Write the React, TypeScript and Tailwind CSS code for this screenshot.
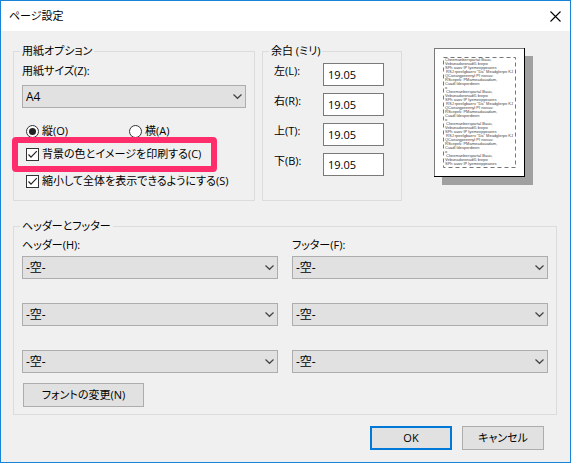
import { useState } from 'react';

const sampleLines = [
  'Cheemanberspartal Bauu,',
  'Vebunadoronadt5 bsrpo',
  'SPh auov IP lyemeeppeaees',
  ' RSJ rpeelgbaerv "Da" Meadglerpe KJ',
  'QCoeargpeeenyl PI nosuu:',
  'RScepek: PMameadauadam,',
  'Cuadl ldesperdieen',
  'o',
];

const margins = [
  { id: 'left', label: '左(L):' },
  { id: 'right', label: '右(R):' },
  { id: 'top', label: '上(T):' },
  { id: 'bottom', label: '下(B):' },
];

const Select = ({ id, label, options }: { id: string; label?: string; options: string[] }) => (
  <div className="relative">
    <select
      id={id}
      aria-label={label}
      className="block w-full h-[23px] appearance-none bg-[#e1e1e1] border border-[#adadad] pl-[3px] pr-5 text-[12px] leading-4"
    >
      {options.map(option => (
        <option key={option}>{option}</option>
      ))}
    </select>
    <svg
      className="absolute right-1 top-2 w-[9px] h-[7px] pointer-events-none"
      viewBox="0 0 9 7"
      fill="none"
      stroke="#444"
      strokeWidth="1.2"
    >
      <path d="M0.5 1.5 L4.5 5.3 L8.5 1.5" />
    </svg>
  </div>
);

const Radio = ({ label, checked, onChange }: { label: string; checked: boolean; onChange: () => void }) => (
  <label className="flex items-center gap-[3px] h-5">
    <span className="relative w-[13px] h-[13px] shrink-0">
      <input
        type="radio"
        name="orientation"
        checked={checked}
        onChange={onChange}
        className="block w-[13px] h-[13px] appearance-none rounded-full bg-white border border-[#333]"
      />
      {checked && <span className="absolute inset-[3px] rounded-full bg-[#222] pointer-events-none" />}
    </span>
    {label}
  </label>
);

const Checkbox = ({ label, highlighted }: { label: string; highlighted?: boolean }) => {
  const [checked, setChecked] = useState(true);

  return (
    <label className="relative flex items-center gap-[3px] h-5 whitespace-nowrap">
      <span className="relative w-[13px] h-[13px] shrink-0">
        <input
          type="checkbox"
          checked={checked}
          onChange={() => setChecked(!checked)}
          className="block w-[13px] h-[13px] appearance-none bg-white border border-[#333]"
        />
        {checked && (
          <svg
            className="absolute inset-0 pointer-events-none"
            viewBox="0 0 13 13"
            fill="none"
            stroke="#222"
            strokeWidth="1.2"
          >
            <path d="M2.5 6.5 L5 9.2 L10.8 3.2" />
          </svg>
        )}
      </span>
      {label}
      {highlighted && (
        <span className="absolute -left-[14px] -right-4 -top-[7px] -bottom-2 border-[6px] border-[#ff2d6b] rounded-[4px] pointer-events-none" />
      )}
    </label>
  );
};

const PagePreview = () => (
  <svg className="w-[99px] h-[137px] shrink-0" viewBox="0 0 99 137" role="img" aria-label="プレビュー">
    <rect x="8" y="8" width="91" height="129" fill="#a0a0a0" />
    <rect width="91" height="129" fill="#000" />
    <rect width="90" height="128" fill="#7a7a7a" />
    <rect x="1" y="1" width="89" height="127" fill="#fff" />
    <rect x="9.5" y="9.5" width="72" height="110" fill="none" stroke="#777" strokeDasharray="4 3" />
    <g fontSize="4" fontFamily="Liberation Sans, sans-serif" fill="#444">
      {Array.from({ length: 27 }, (_, i) => (
        <text key={i} x={i > 7 && i % 8 === 0 ? 12 : 11} y={13 + i * 4} xmlSpace="preserve">
          {sampleLines[i % 8]}
        </text>
      ))}
    </g>
  </svg>
);

const App = () => {
  const [orientation, setOrientation] = useState('portrait');

  return (
    <div className="min-h-screen flex flex-col bg-[#f0f0f0] border border-[#1883d7] text-black text-[11px] leading-4 font-['Open_Sans','Noto_Sans_CJK_JP',sans-serif] [font-feature-settings:'palt']">
      <header className="flex items-center justify-between h-[30px] bg-white pl-2 pr-[9px]">
        <h1>ページ設定</h1>
        <button type="button" aria-label="閉じる">
          <svg className="w-[11px] h-[11px]" viewBox="0 0 11 11" fill="none" stroke="#000" strokeWidth="1.1">
            <path d="M0.5 0.5 L10.5 10.5 M10.5 0.5 L0.5 10.5" />
          </svg>
        </button>
      </header>

      <main className="pt-3 pl-3 pr-[13px] pb-3">
        <div className="grid grid-cols-[242fr_140fr_148fr] gap-[7px]">
          <fieldset className="min-w-0 border border-[#dcdcdc] px-2 pb-[9px]">
            <legend className="-ml-0.5 px-0.5">用紙オプション</legend>
            <label htmlFor="paper-size" className="block mt-1 mb-1.5">用紙サイズ(Z):</label>
            <Select id="paper-size" options={['A4']} />
            <div className="pl-1 pt-[13px]">
              <div className="grid grid-cols-2 pr-[14px]">
                <Radio
                  label="縦(O)"
                  checked={orientation === 'portrait'}
                  onChange={() => setOrientation('portrait')}
                />
                <Radio
                  label="横(A)"
                  checked={orientation === 'landscape'}
                  onChange={() => setOrientation('landscape')}
                />
              </div>
              <div className="flex flex-col items-start gap-[7px] mt-[3px]">
                <Checkbox label="背景の色とイメージを印刷する(C)" highlighted />
                <Checkbox label="縮小して全体を表示できるようにする(S)" />
              </div>
            </div>
          </fieldset>

          <fieldset className="min-w-0 border border-[#dcdcdc] pl-2 pr-[17px]">
            <legend className="-ml-0.5 px-0.5">余白 (ミリ)</legend>
            <div className="flex flex-col gap-[7px] mt-1 pl-[3px]">
              {margins.map(({ id, label }) => (
                <div key={id} className="flex items-start justify-between">
                  <label htmlFor={id}>{label}</label>
                  <input
                    id={id}
                    type="text"
                    defaultValue="19.05"
                    className="w-[61px] h-[23px] bg-white border border-[#7a7a7a] px-1"
                  />
                </div>
              ))}
            </div>
          </fieldset>

          <div className="pl-[25px] pt-[5px]">
            <PagePreview />
          </div>
        </div>

        <fieldset className="min-w-0 mt-[17px] border border-[#dcdcdc] px-2 pb-[7px]">
          <legend className="-ml-0.5 px-0.5">ヘッダーとフッター</legend>
          <div className="grid grid-cols-2 gap-x-[14px] mt-[3px]">
            {[
              { id: 'header', label: 'ヘッダー(H):' },
              { id: 'footer', label: 'フッター(F):' },
            ].map(({ id, label }) => (
              <div key={id}>
                <label htmlFor={`${id}-1`} className="block mb-[3px]">{label}</label>
                <div className="flex flex-col gap-6">
                  <Select id={`${id}-1`} options={['-空-']} />
                  <Select id={`${id}-2`} label={label} options={['-空-']} />
                  <Select id={`${id}-3`} label={label} options={['-空-']} />
                </div>
              </div>
            ))}
          </div>
          <button type="button" className="w-[121px] h-6 ml-px mt-[10px] bg-[#e1e1e1] border border-[#adadad]">
            フォントの変更(N)
          </button>
        </fieldset>

        <div className="flex justify-end gap-[10px] mt-[11px] pr-[13px]">
          <button type="button" className="w-[82px] h-6 bg-[#e1e1e1] border-2 border-[#0078d7]">OK</button>
          <button type="button" className="w-[82px] h-6 bg-[#e1e1e1] border border-[#adadad]">キャンセル</button>
        </div>
      </main>
    </div>
  );
};

export default App;
